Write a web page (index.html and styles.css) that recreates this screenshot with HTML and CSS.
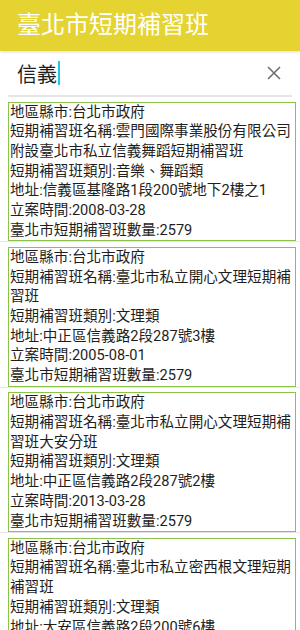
FILE: index.html
```html
<!DOCTYPE html>
<html lang="zh-Hant">

<head>
    <meta charset="UTF-8">
    <meta name="viewport" content="width=device-width, initial-scale=1.0">
    <title>臺北市短期補習班</title>
    <link rel="stylesheet" href="styles.css">
</head>

<body>
    <div class="app-bar">臺北市短期補習班</div>

    <div class="search-row">
        <div class="search-text">信義<span class="cursor"></span></div>
        <div class="clear-btn">
            <svg width="14" height="14" viewBox="0 0 14 14">
                <path d="M1 1 L13 13 M13 1 L1 13" stroke="#6f6f6f" stroke-width="1.6" fill="none" />
            </svg>
        </div>
    </div>

    <ul class="result-list">
        <li class="item">
            <div class="card">
                <div>地區縣市:台北市政府</div>
                <div>短期補習班名稱:雲門國際事業股份有限公司附設臺北市私立信義舞蹈短期補習班</div>
                <div>短期補習班類別:音樂、舞蹈類</div>
                <div>地址:信義區基隆路1段200號地下2樓之1</div>
                <div>立案時間:2008-03-28</div>
                <div>臺北市短期補習班數量:2579</div>
            </div>
        </li>
        <li class="item">
            <div class="card">
                <div>地區縣市:台北市政府</div>
                <div>短期補習班名稱:臺北市私立開心文理短期補習班</div>
                <div>短期補習班類別:文理類</div>
                <div>地址:中正區信義路2段287號3樓</div>
                <div>立案時間:2005-08-01</div>
                <div>臺北市短期補習班數量:2579</div>
            </div>
        </li>
        <li class="item">
            <div class="card">
                <div>地區縣市:台北市政府</div>
                <div>短期補習班名稱:臺北市私立開心文理短期補習班大安分班</div>
                <div>短期補習班類別:文理類</div>
                <div>地址:中正區信義路2段287號2樓</div>
                <div>立案時間:2013-03-28</div>
                <div>臺北市短期補習班數量:2579</div>
            </div>
        </li>
        <li class="item">
            <div class="card">
                <div>地區縣市:台北市政府</div>
                <div>短期補習班名稱:臺北市私立密西根文理短期補習班</div>
                <div>短期補習班類別:文理類</div>
                <div>地址:大安區信義路2段200號6樓</div>
                <div>立案時間:2010-05-12</div>
                <div>臺北市短期補習班數量:2579</div>
            </div>
        </li>
    </ul>
</body>

</html>
```

FILE: styles.css
```css
:root {
    --bar-color: #e4d330;
    --bar-text: #ffffff;
    --card-border: #8bc34a;
    --divider: #e6e6e6;
    --text-primary: #1e1e1e;
    --cursor-color: #26c6da;
    --font-family: Roboto, "Noto Sans CJK TC", sans-serif;
}

body {
    margin: 0;
    width: 300px;
    height: 630px;
    overflow: hidden;
    background: #ffffff;
    font-family: var(--font-family);
}

.app-bar {
    height: 51px;
    background: var(--bar-color);
    color: var(--bar-text);
    font-size: 24px;
    line-height: 51px;
    padding-left: 17px;
    box-shadow: 0 1px 3px rgba(0, 0, 0, 0.15);
    position: relative;
}

.search-row {
    display: flex;
    align-items: center;
    height: 44px;
    margin: 0 8px;
    padding-left: 9px;
    border-bottom: 2px solid var(--divider);
}

.search-text {
    flex: 1;
    font-size: 20px;
    color: var(--text-primary);
    display: flex;
    align-items: center;
}

.cursor {
    display: inline-block;
    width: 2px;
    height: 24px;
    margin-left: 1px;
    background: var(--cursor-color);
}

.clear-btn {
    width: 14px;
    height: 14px;
    margin-right: 11px;
    display: flex;
}

.result-list {
    list-style: none;
    margin: 0;
    padding: 0;
}

.item {
    padding-top: 4.5px;
    border-bottom: 1px solid var(--divider);
}

.card {
    margin-left: 8px;
    width: 285px;
    border: 1px solid var(--card-border);
    font-size: 14.6px;
    line-height: 19.7px;
    color: var(--text-primary);
    padding-left: 1px;
}
```
